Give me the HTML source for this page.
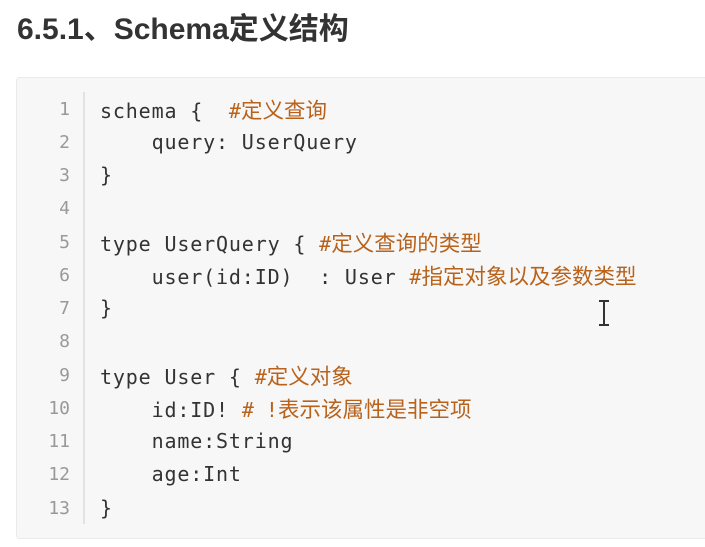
<!DOCTYPE html>
<html><head><meta charset="utf-8"><style>
body{margin:0;width:705px;height:547px;background:#fff;overflow:hidden;font-family:"Liberation Sans","Noto Sans CJK SC",sans-serif;}
h1{position:absolute;left:17px;top:11px;margin:0;font-size:30px;font-weight:bold;color:#333;line-height:38px;}
.box{position:absolute;left:16px;top:77px;width:700px;height:460px;background:#f7f7f7;border-radius:4px;border:1px solid #eaeaea;}
.gut{position:absolute;left:83px;top:92px;width:2px;height:432px;background:#e2e2e2;}
.l{position:absolute;height:33px;line-height:33px;font-family:"DejaVu Sans Mono","Noto Sans CJK SC",monospace;font-size:20px;letter-spacing:0.85px;color:#333;white-space:pre;}
.n{position:absolute;width:56px;left:14px;text-align:right;height:33px;line-height:33px;font-family:"DejaVu Sans Mono",monospace;font-size:18px;color:#999;}
.c{color:#b8621b;letter-spacing:0;font-family:"DejaVu Sans Mono","Noto Sans CJK SC",monospace;}
.c b{font-weight:normal;font-family:"Noto Sans CJK SC",sans-serif;font-size:21.5px;}
</style></head><body>
<h1>6.5.1、Schema定义结构</h1>
<div class="box"></div>
<div class="gut"></div>
<div class="n" style="top:93px">1</div><div class="l" style="left:100px;top:93px">schema {  <span class="c">#<b>定义查询</b></span></div>
<div class="n" style="top:126px">2</div><div class="l" style="left:100px;top:126px">    query: UserQuery</div>
<div class="n" style="top:159px">3</div><div class="l" style="left:100px;top:159px">}</div>
<div class="n" style="top:192px">4</div>
<div class="n" style="top:226px">5</div><div class="l" style="left:100px;top:226px">type UserQuery { <span class="c">#<b>定义查询的类型</b></span></div>
<div class="n" style="top:259px">6</div><div class="l" style="left:100px;top:259px">    user(id:ID)  : User <span class="c">#<b>指定对象以及参数类型</b></span></div>
<div class="n" style="top:292px">7</div><div class="l" style="left:100px;top:292px">}</div>
<div class="n" style="top:325px">8</div>
<div class="n" style="top:359px">9</div><div class="l" style="left:100px;top:359px">type User { <span class="c">#<b>定义对象</b></span></div>
<div class="n" style="top:392px">10</div><div class="l" style="left:100px;top:392px">    id:ID! <span class="c"># !<b>表示该属性是非空项</b></span></div>
<div class="n" style="top:425px">11</div><div class="l" style="left:100px;top:425px">    name:String</div>
<div class="n" style="top:458px">12</div><div class="l" style="left:100px;top:458px">    age:Int</div>
<div class="n" style="top:492px">13</div><div class="l" style="left:100px;top:492px">}</div>
<div style="position:absolute;left:603px;top:301px;width:2px;height:24px;background:#333;"></div>
<div style="position:absolute;left:599px;top:300px;width:10px;height:2px;background:#333;"></div>
<div style="position:absolute;left:599px;top:324px;width:10px;height:2px;background:#333;"></div>
</body></html>
